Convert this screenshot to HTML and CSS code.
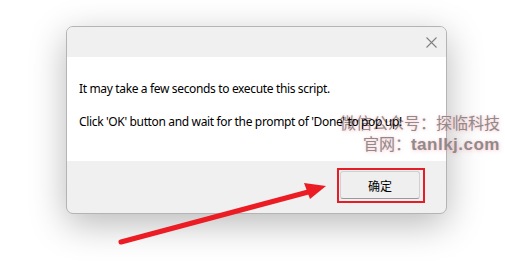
FILE: index.html
```html
<!DOCTYPE html>
<html lang="en">
<head>
  <meta charset="UTF-8" />
  <meta name="viewport" content="width=device-width, initial-scale=1.0"/>
  <title>Script Prompt</title>
  <link rel="stylesheet" href="styles.css">
</head>
<body>
  <div class="page">
    <div class="dialog">
      <div class="title-bar">
        <button class="close" aria-label="Close">
          <svg width="11" height="11" viewBox="0 0 11 11">
            <path d="M0.5 0.5 L10.5 10.5 M10.5 0.5 L0.5 10.5" stroke="#808080" stroke-width="1.1" fill="none"/>
          </svg>
        </button>
      </div>
      <div class="content">
        <p>It may take a few seconds to execute this script.</p>
        <p>Click 'OK' button and wait for the prompt of 'Done' to pop up!</p>
      </div>
      <div class="footer">
        <div class="highlight">
          <button class="ok">确定</button>
        </div>
      </div>
    </div>

    <!-- annotation arrow pointing at the OK button -->
    <svg class="arrow" width="505" height="261" viewBox="0 0 505 261">
      <line x1="121" y1="242" x2="312" y2="191" stroke="#ec1c24" stroke-width="5" stroke-linecap="round"/>
      <polygon points="326,186 304,183 310,199" fill="#ec1c24"/>
    </svg>

    <div class="watermark">
      <div>微信公众号：探临科技</div>
      <div class="site">官网：<b>tanlkj.com</b></div>
    </div>
  </div>
</body>
</html>
```

FILE: styles.css
```css
body {
  margin: 0;
  background-color: #ffffff;
  font-family: "Noto Sans", "Noto Sans CJK SC", sans-serif;
  color: #000;
}

.page {
  position: relative;
  width: 505px;
  height: 261px;
  padding: 26px 0 0 66px;
  box-sizing: border-box;
  overflow: hidden;
}

.dialog {
  width: 381px;
  height: 188px;
  box-sizing: border-box;
  border: 1px solid #b4b4b4;
  border-radius: 7px;
  background-color: #f0f0f0;
  box-shadow: 0 10px 36px rgba(0, 0, 0, 0.28);
  display: flex;
  flex-direction: column;
  overflow: hidden;
}

.title-bar {
  height: 30px;
  display: flex;
  justify-content: flex-end;
  align-items: center;
  padding-right: 9px;
  background-color: #f0f0f0;
}

.close {
  border: none;
  background: none;
  padding: 0;
  width: 11px;
  height: 11px;
  display: flex;
  margin-top: 1px;
}

.content {
  background-color: #ffffff;
  height: 104px;
  padding: 23px 0 0 12px;
  box-sizing: border-box;
  font-size: 12px;
  letter-spacing: -0.35px;
}

.content p {
  position: relative;
  z-index: 2;
  margin: 0 0 16px 0;
  line-height: 17px;
}

.footer {
  flex: 1;
  display: flex;
  justify-content: flex-end;
  align-items: flex-start;
  padding: 7px 21px 0 0;
}

.highlight {
  border: 2px solid #e51d27;
  width: 83px;
  height: 30px;
  padding: 1px 0 0 1px;
  box-sizing: content-box;
}

.ok {
  width: 80px;
  height: 28px;
  border: 1px solid #d0d0d0;
  border-bottom-color: #9a9a9a;
  border-radius: 3px;
  background-color: #efefef;
  font-family: "Noto Sans CJK SC", sans-serif;
  font-size: 12px;
  color: #000;
  padding: 0;
}

.arrow {
  position: absolute;
  left: 0;
  top: 0;
  pointer-events: none;
}

.watermark {
  position: absolute;
  z-index: 1;
  right: 5px;
  top: 112px;
  text-align: right;
  font-family: "Noto Sans CJK SC", sans-serif;
  font-size: 16px;
  line-height: 21px;
  color: #8c8c8c;
  text-shadow: 0 0 2px rgba(255, 205, 210, 0.9), 1px 1px 4px rgba(255, 140, 155, 0.4);
  pointer-events: none;
}

.watermark .site b {
  font-family: "Liberation Sans", sans-serif;
  font-weight: bold;
  font-size: 17px;
  letter-spacing: 0.5px;
}
```
